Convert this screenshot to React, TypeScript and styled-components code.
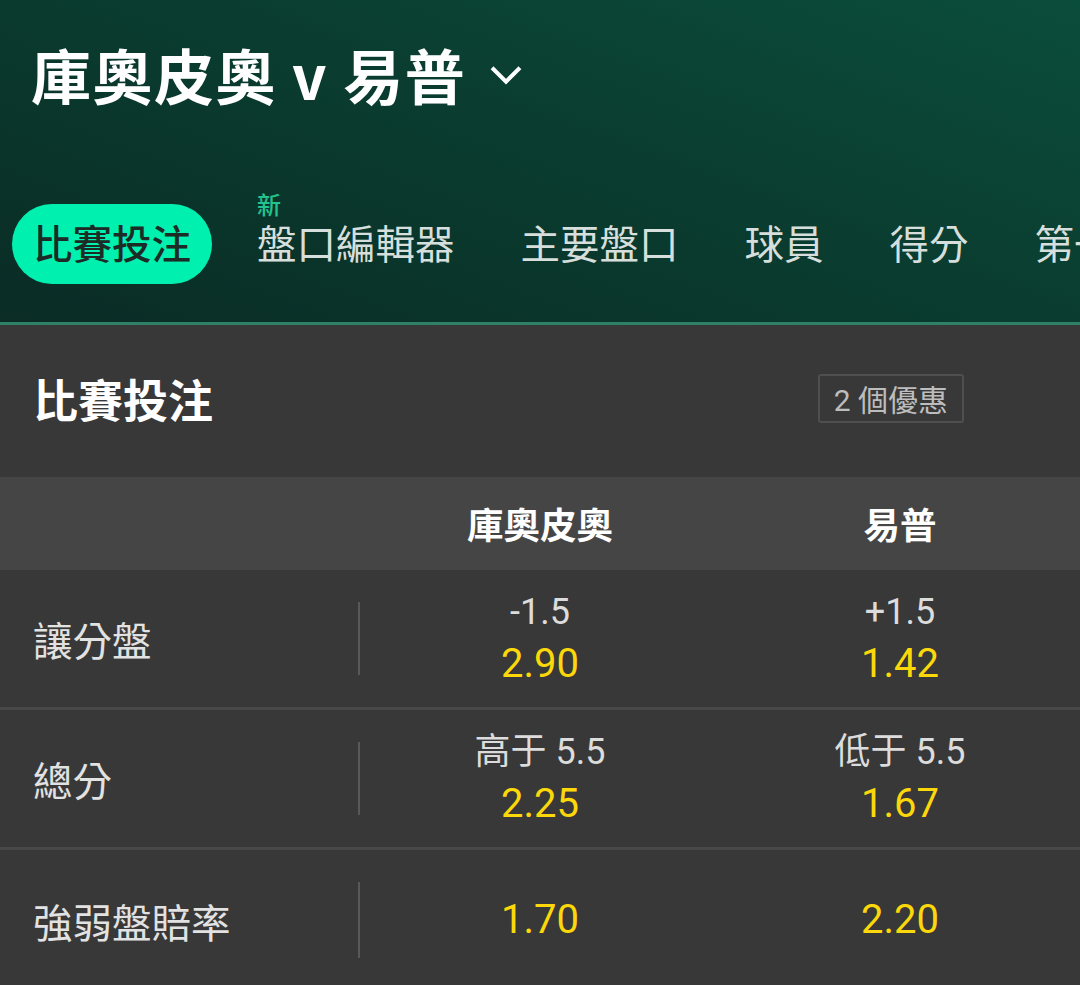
import React from "react";
import styled, { createGlobalStyle } from "styled-components";

const GlobalStyle = createGlobalStyle`
  html, body {
    margin: 0;
    padding: 0;
    background: #383838;
  }
  body {
    font-family: Roboto, "Noto Sans CJK TC", "Noto Sans", sans-serif;
    -webkit-font-smoothing: antialiased;
  }
`;

interface Tab {
  label: string;
  isNew?: boolean;
}

interface Selection {
  line?: string;
  odds: string;
}

interface MarketRow {
  name: string;
  home: Selection;
  away: Selection;
}

const tabs: Tab[] = [
  { label: "比賽投注" },
  { label: "盤口編輯器", isNew: true },
  { label: "主要盤口" },
  { label: "球員" },
  { label: "得分" },
  { label: "第一節" },
];

const rows: MarketRow[] = [
  { name: "讓分盤", home: { line: "-1.5", odds: "2.90" }, away: { line: "+1.5", odds: "1.42" } },
  { name: "總分", home: { line: "高于 5.5", odds: "2.25" }, away: { line: "低于 5.5", odds: "1.67" } },
  { name: "強弱盤賠率", home: { odds: "1.70" }, away: { odds: "2.20" } },
];

const ChevronDown = () => (
  <svg width="40" height="40" viewBox="0 0 24 24" fill="none" stroke="#fff" strokeWidth="2.4" strokeLinecap="square">
    <path d="M4.5 8.5l7.5 7.5 7.5-7.5" />
  </svg>
);

export default function App() {
  const active = 0;
  return (
    <>
      <GlobalStyle />
      <Page>
        <Header>
          <TitleRow>
            <Title>庫奧皮奧 v 易普</Title>
            <ChevronDown />
          </TitleRow>
          <TabBar>
            {tabs.map((t, i) => (
              <TabItem key={t.label} $active={i === active}>
                {t.isNew ? <NewTag>新</NewTag> : null}
                <TabLabel>{t.label}</TabLabel>
              </TabItem>
            ))}
          </TabBar>
        </Header>

        <Section>
          <SectionHead>
            <SectionTitle>比賽投注</SectionTitle>
            <OfferBadge>2 個優惠</OfferBadge>
          </SectionHead>

          <TeamsRow>
            <span />
            <TeamName>庫奧皮奧</TeamName>
            <TeamName>易普</TeamName>
          </TeamsRow>

          {rows.map((r) => (
            <Row key={r.name}>
              <RowLabel>{r.name}</RowLabel>
              <Cell>
                {r.home.line ? <Line>{r.home.line}</Line> : null}
                <Odds>{r.home.odds}</Odds>
              </Cell>
              <Cell>
                {r.away.line ? <Line>{r.away.line}</Line> : null}
                <Odds>{r.away.odds}</Odds>
              </Cell>
            </Row>
          ))}
        </Section>
      </Page>
    </>
  );
}

const Page = styled.div`
  width: 1080px;
  height: 985px;
  overflow: hidden;
  background: #383838;
`;

const Header = styled.header`
  height: 325px;
  box-sizing: border-box;
  background: linear-gradient(200deg, #0b4d3b 0%, #0a3d30 45%, #0a2c25 100%);
  border-bottom: 3px solid #2e8067;
  display: flex;
  flex-direction: column;
`;

const TitleRow = styled.div`
  display: flex;
  align-items: center;
  gap: 20px;
  padding: 30px 0 0 31px;
  height: 88px;

  svg {
    margin-top: 2px;
  }
`;

const Title = styled.h1`
  margin: 0;
  font-family: "Noto Sans CJK TC", sans-serif;
  font-size: 60px;
  font-weight: 700;
  letter-spacing: 1.5px;
  color: #fff;
  line-height: 88px;
`;

const TabBar = styled.nav`
  display: flex;
  align-items: center;
  margin-top: 86px;
  padding-left: 12px;
  white-space: nowrap;
`;

const TabItem = styled.div<{ $active: boolean }>`
  position: relative;
  height: 80px;
  box-sizing: border-box;
  display: flex;
  align-items: center;
  padding: 0 ${(p) => (p.$active ? "21px" : "0")} 4px;
  margin-right: ${(p) => (p.$active ? "45px" : "66px")};
  border-radius: 40px;
  font-family: "Noto Sans CJK TC", sans-serif;
  font-size: 39.5px;
  font-weight: ${(p) => (p.$active ? 500 : 400)};
  color: ${(p) => (p.$active ? "#1c2b26" : "#d6dfdc")};
  background: ${(p) => (p.$active ? "#00f0b0" : "transparent")};
`;

const TabLabel = styled.span`
  line-height: 42px;
`;

const NewTag = styled.span`
  position: absolute;
  left: 0;
  top: -12px;
  font-size: 24px;
  line-height: 24px;
  font-weight: 500;
  color: #23c38e;
`;

const Section = styled.section`
  display: flex;
  flex-direction: column;
`;

const SectionHead = styled.div`
  height: 152px;
  box-sizing: border-box;
  display: flex;
  align-items: center;
  justify-content: space-between;
  padding: 0 116px 6px 33px;
`;

const SectionTitle = styled.h2`
  margin: 0;
  font-family: "Noto Sans CJK TC", sans-serif;
  font-size: 45px;
  font-weight: 700;
  color: #fff;
`;

const OfferBadge = styled.span`
  height: 49px;
  box-sizing: border-box;
  display: flex;
  align-items: center;
  padding: 0 14px;
  border: 2px solid #4f4f4f;
  border-radius: 3px;
  font-size: 30px;
  color: #bdbdbd;
`;

const grid = `
  display: grid;
  grid-template-columns: 360px 360px 360px;
`;

const TeamsRow = styled.div`
  ${grid}
  height: 93px;
  align-items: center;
  background: #454545;
`;

const TeamName = styled.div`
  text-align: center;
  font-family: "Noto Sans CJK TC", sans-serif;
  font-size: 36.5px;
  font-weight: 700;
  color: #fff;
`;

const Row = styled.div`
  ${grid}
  height: 140px;
  box-sizing: border-box;
  &:not(:last-child) {
    border-bottom: 3px solid #484848;
  }
`;

const RowLabel = styled.div`
  display: flex;
  align-items: center;
  padding-left: 33px;
  font-family: "Noto Sans CJK TC", sans-serif;
  font-size: 39.5px;
  color: #e2e2e2;
  position: relative;

  &::after {
    content: "";
    position: absolute;
    right: 0;
    top: 32px;
    bottom: 32px;
    width: 2px;
    background: #585858;
  }
`;

const Cell = styled.div`
  display: flex;
  flex-direction: column;
  align-items: center;
  justify-content: center;
  gap: 6px;
`;

const Line = styled.div`
  font-family: Roboto, "Noto Sans CJK TC", sans-serif;
  font-size: 36px;
  line-height: 44px;
  color: #dcdcdc;
`;

const Odds = styled.div`
  font-family: Roboto, sans-serif;
  font-size: 40px;
  line-height: 48px;
  color: #fcd80b;
`;
